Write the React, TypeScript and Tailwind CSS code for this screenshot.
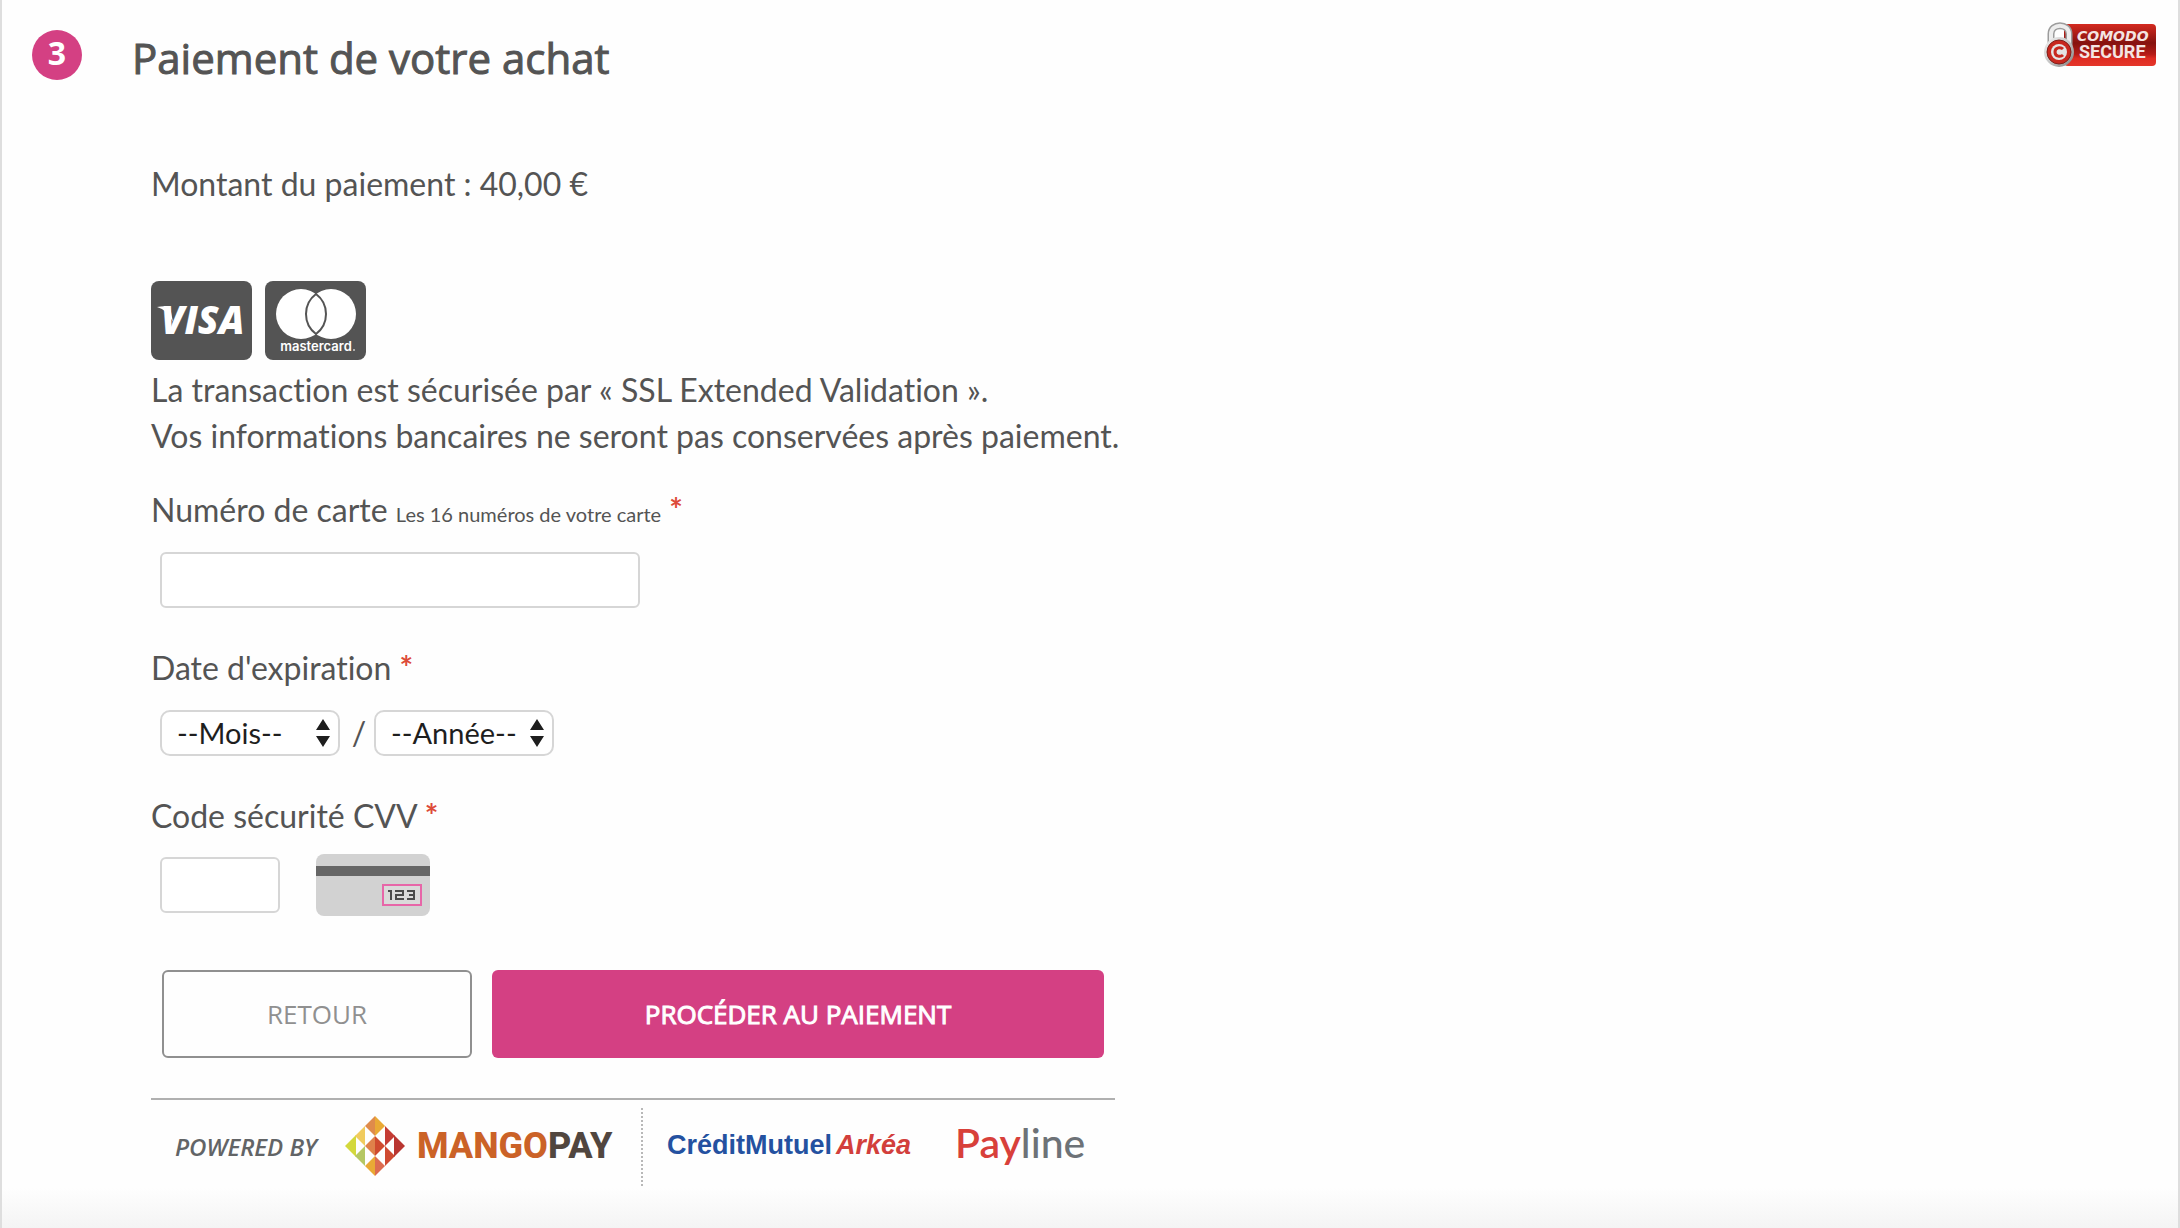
import type { ReactNode } from "react";

function Required() {
  return <span className="font-bold text-[#dd4b39]">*</span>;
}

function ComodoBadge() {
  return (
    <svg width="114" height="48" viewBox="0 0 114 48" role="img" aria-label="Comodo Secure">
      <defs>
        <linearGradient id="badge" x1="0" y1="0" x2="0" y2="1">
          <stop offset="0" stopColor="#d42a20" />
          <stop offset="0.45" stopColor="#85120f" />
          <stop offset="0.72" stopColor="#b51c17" />
          <stop offset="0.82" stopColor="#de2c22" />
          <stop offset="1" stopColor="#e5362a" />
        </linearGradient>
        <linearGradient id="steel" x1="0" y1="0" x2="1" y2="1">
          <stop offset="0" stopColor="#f4f4f4" />
          <stop offset="0.5" stopColor="#c6c6c6" />
          <stop offset="1" stopColor="#7d7d7d" />
        </linearGradient>
      </defs>
      <rect x="20" y="2" width="92" height="42" rx="4" fill="url(#badge)" />
      <path d="M7 24V12C7 1 25 1 25 12v12" fill="none" stroke="#9c9c9c" strokeWidth="7" />
      <path d="M7 24V12C7 1 25 1 25 12v12" fill="none" stroke="#ededed" strokeWidth="4" />
      <circle cx="15" cy="30" r="15" fill="url(#steel)" />
      <circle cx="15" cy="30" r="12" fill="#c8281f" stroke="#7e201b" strokeWidth="1" />
      <circle cx="15" cy="30" r="8" fill="#e4e4e4" />
      <path d="M19 27c-2-2-8-2-8 3s6 5 8 3" fill="none" stroke="#c8281f" strokeWidth="3" />
      <text x="33" y="19" fontFamily="DejaVu Sans" fontWeight="bold" fontStyle="italic" fontSize="14" fill="#f4e4e2">COMODO</text>
      <text x="35" y="36" fontFamily="Roboto" fontWeight="bold" fontSize="18" fill="#f4e4e2">SECURE</text>
    </svg>
  );
}

function VisaCard() {
  return (
    <svg width="101" height="79" viewBox="0 0 101 79" role="img" aria-label="Visa">
      <rect width="101" height="79" rx="8" fill="#545454" />
      <path d="M6 26c5-1 10-1 13 0l3 15C18 33 13 28 6 26z" fill="#fff" />
      <text x="10" y="53" fontFamily="Open Sans" fontWeight="800" fontStyle="italic" fontSize="38" fill="#fff">VISA</text>
    </svg>
  );
}

function MastercardCard() {
  return (
    <svg width="101" height="79" viewBox="0 0 101 79" role="img" aria-label="Mastercard">
      <rect width="101" height="79" rx="8" fill="#545454" />
      <circle cx="36" cy="33" r="25" fill="#fff" />
      <circle cx="66" cy="33" r="25" fill="#fff" />
      <path d="M51 13a25 25 0 0 1 0 40a25 25 0 0 1 0-40z" fill="#fff" stroke="#545454" strokeWidth="2" />
      <text x="51" y="70" textAnchor="middle" fontFamily="Inter" fontWeight="600" fontSize="13" fill="#fff">mastercard</text>
      <circle cx="89" cy="69" r="1" fill="#ccc" />
    </svg>
  );
}

function CvvCard() {
  return (
    <svg width="114" height="62" viewBox="0 0 114 62" role="img" aria-label="Emplacement du code CVV : 123">
      <rect width="114" height="62" rx="8" fill="#d2d2d2" />
      <rect y="12" width="114" height="10" fill="#666" />
      <rect x="67" y="31" width="38" height="20" fill="#dadada" stroke="#e766a8" strokeWidth="2" />
      <path d="M72 37h3v9M79 37h8v4h-7v4h8M91 37h7v8h-7M93 41h5" fill="none" stroke="#4a4a4a" strokeWidth="2" />
    </svg>
  );
}

function MangoMark() {
  return (
    <svg width="60" height="60" viewBox="0 0 60 60" aria-hidden="true">
      <path d="M0 30 11 19V41z" fill="#d3d83c" />
      <path d="M10 20 20 10V30z" fill="#f0cb5e" />
      <path d="M10 40 20 30V50z" fill="#b5c763" />
      <path d="M20 10 30 0V20z" fill="#df8b4b" />
      <path d="M30 0 40 10 30 20z" fill="#e9a935" />
      <path d="M20 30 30 20V40z" fill="#df814a" />
      <path d="M30 20 40 30 30 40z" fill="#cf4b2f" />
      <path d="M20 50 30 40V60z" fill="#e9a935" />
      <path d="M30 40 40 50 30 60z" fill="#dd6c50" />
      <path d="M40 10 50 20 40 30z" fill="#c43c34" />
      <path d="M40 30 50 40 40 50z" fill="#cf4a31" />
      <path d="M49 19 60 30 49 41z" fill="#b93631" />
    </svg>
  );
}

function PeriodSelect({ id, label, placeholder, options }: { id: string; label: string; placeholder: string; options: string[] }) {
  return (
    <span className="relative inline-flex">
      <select
        id={id}
        aria-label={label}
        className="h-[46px] w-[180px] appearance-none rounded-[10px] border-2 border-[#d6d6d6] bg-white pl-[15px] text-[29px] leading-9 text-[#1e1e1e]"
      >
        <option>{placeholder}</option>
        {options.map((option) => (
          <option key={option}>{option}</option>
        ))}
      </select>
      <svg className="pointer-events-none absolute top-2 right-[9px]" width="16" height="30" viewBox="0 0 16 30" aria-hidden="true">
        <path d="M8 1 15 12H1zM8 29 1 18H15z" fill="#1e1e1e" />
      </svg>
    </span>
  );
}

function FieldLabel({ htmlFor, children }: { htmlFor: string; children: ReactNode }) {
  return (
    <label htmlFor={htmlFor} className="block leading-[46px]">
      {children} <Required />
    </label>
  );
}

const months = ["01", "02", "03", "04", "05", "06", "07", "08", "09", "10", "11", "12"];
const years = ["2019", "2020", "2021", "2022", "2023", "2024"];

export default function App() {
  return (
    <div className="flex min-h-screen flex-col border-x-2 border-[#dedede] bg-[#fefefe] font-['Lato',sans-serif] text-[32px] text-[#545454] [font-variant-ligatures:none] [text-rendering:optimizeLegibility]">
      <header className="flex items-start pt-[22px] pr-5 pl-[30px] font-['Open_Sans',sans-serif]">
        <span className="mt-2 flex size-[50px] shrink-0 justify-center rounded-full bg-[#d44083] text-[32px] leading-[46px] font-bold text-white">
          3
        </span>
        <h1 className="ml-[50px] text-[42px] leading-[72px] [-webkit-text-stroke:1px_#545454]">Paiement de votre achat</h1>
        <span className="ml-auto">
          <ComodoBadge />
        </span>
      </header>

      <main className="ml-[149px] w-[964px]">
        <p className="mt-[67px] leading-[46px]">Montant du paiement : 40,00 €</p>

        <div className="mt-[74px] flex gap-[13px]">
          <VisaCard />
          <MastercardCard />
        </div>
        <p className="mt-[7px] leading-[46px] whitespace-nowrap">
          La transaction est sécurisée par « SSL Extended Validation ».
          <br />
          Vos informations bancaires ne seront pas conservées après paiement.
        </p>

        <form onSubmit={(event) => event.preventDefault()}>
          <div className="mt-7">
            <FieldLabel htmlFor="card">
              Numéro de carte <small className="text-[20px]">Les 16 numéros de votre carte</small>
            </FieldLabel>
            <input id="card" inputMode="numeric" className="mt-[15px] ml-[9px] block h-14 w-[480px] rounded-md border-2 border-[#d6d6d6] bg-white px-3" />
          </div>

          <div className="mt-[37px]">
            <FieldLabel htmlFor="month">Date d'expiration</FieldLabel>
            <div className="mt-[19px] ml-[9px] flex items-center leading-[46px]">
              <PeriodSelect id="month" label="Mois" placeholder="--Mois--" options={months} />
              <span className="w-[34px] pl-1 text-center">/</span>
              <PeriodSelect id="year" label="Année" placeholder="--Année--" options={years} />
            </div>
          </div>

          <div className="mt-[37px]">
            <FieldLabel htmlFor="cvv">Code sécurité CVV</FieldLabel>
            <div className="mt-[15px] ml-[9px] flex items-center gap-9">
              <input id="cvv" inputMode="numeric" className="h-14 w-[120px] rounded-md border-2 border-[#d6d6d6] bg-white px-3" />
              <CvvCard />
            </div>
          </div>

          <div className="mt-[54px] ml-[11px] flex gap-5 font-['Open_Sans',sans-serif] text-[26px]">
            <button type="button" className="h-[88px] w-[310px] rounded-md border-2 border-[#909090] text-[#909090]">
              RETOUR
            </button>
            <button type="submit" className="h-[88px] w-[612px] rounded-md bg-[#d44083] text-white [-webkit-text-stroke:1px_#fff]">
              PROCÉDER AU PAIEMENT
            </button>
          </div>
        </form>
      </main>

      <footer className="ml-[149px] flex w-[964px] pt-10">
        <div className="flex h-[90px] w-full items-start border-t-2 border-[#b0b0b0] pt-2 whitespace-nowrap">
          <span className="mt-4 ml-6 w-[170px] font-['Open_Sans',sans-serif] text-[24px] leading-[46px] font-semibold italic text-[#626466]">
            POWERED BY
          </span>
          <span className="mt-2 flex items-center">
            <MangoMark />
            <span className="ml-3 font-['Roboto',sans-serif] text-[36px] leading-[60px] font-extrabold text-[#cb6227]">
              MANGO<span className="text-[#51463f]">PAY</span>
            </span>
          </span>
          <span className="ml-auto h-[78px] w-0 border-l-2 border-dotted border-[#b8b8b8]" />
          <span className="mt-[14px] ml-6 w-[288px] font-['Liberation_Sans',sans-serif] text-[27px] leading-[46px] font-bold text-[#2451a0]">
            CréditMutuel<i className="ml-1 text-[#d23f3c]">Arkéa</i>
          </span>
          <span className="mt-[10px] w-[160px] font-['Lato',sans-serif] text-[41px] leading-[50px] font-semibold text-[#d8403a]">
            Pay<span className="font-medium text-[#6d7277]">line</span>
          </span>
        </div>
      </footer>
      <div className="h-10 bg-linear-to-b from-[#fefefe] to-[#f4f4f4]" />
    </div>
  );
}
